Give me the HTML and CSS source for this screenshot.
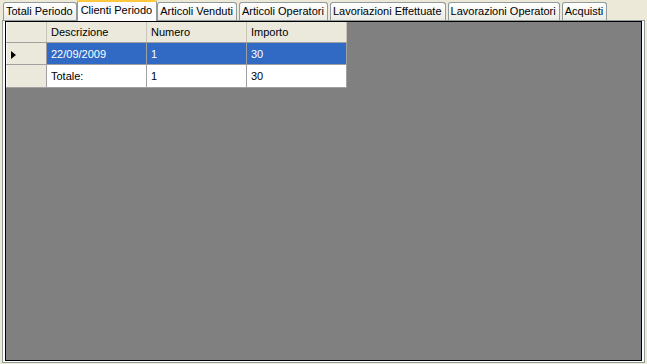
FILE: index.html
```html
<!DOCTYPE html>
<html lang="it">
<head>
    <meta charset="UTF-8">
    <title>Clienti Periodo</title>
    <link rel="stylesheet" href="styles.css">
</head>
<body>
    <div class="tabs">
        <div class="tab">Totali Periodo</div>
        <div class="tab active">Clienti Periodo</div>
        <div class="tab">Articoli Venduti</div>
        <div class="tab">Articoli Operatori</div>
        <div class="tab">Lavoriazioni Effettuate</div>
        <div class="tab">Lavorazioni Operatori</div>
        <div class="tab">Acquisti</div>
    </div>
    <div class="page">
        <div class="grid">
            <table class="data">
                <tr class="head">
                    <td class="rowhead"></td>
                    <td>Descrizione</td>
                    <td>Numero</td>
                    <td>Importo</td>
                </tr>
                <tr class="selected">
                    <td class="rowhead"><span class="arrow"></span></td>
                    <td>22/09/2009</td>
                    <td>1</td>
                    <td>30</td>
                </tr>
                <tr class="last">
                    <td class="rowhead"></td>
                    <td>Totale:</td>
                    <td>1</td>
                    <td>30</td>
                </tr>
            </table>
        </div>
    </div>
</body>
</html>
```

FILE: styles.css
```css
html, body {
    margin: 0;
    height: 364px;
    overflow: hidden;
}
body {
    display: flex;
    flex-direction: column;
    background: #ece9d8;
    font-family: "Liberation Sans", Arial, sans-serif;
    font-size: 11px;
    color: #000;
}
.tabs {
    display: flex;
    align-items: flex-end;
    height: 20px;
    padding-left: 3px;
    position: relative;
    z-index: 1;
}
.tab {
    height: 17px;
    line-height: 17px;
    padding: 0 3px 0 2px;
    margin-right: 2px;
    border: 1px solid #919b9c;
    border-bottom: none;
    border-radius: 3px 3px 0 0;
    background: linear-gradient(#ffffff, #f3f3ef 60%, #ecebe5);
    white-space: nowrap;
}
.tab.active {
    height: 19px;
    line-height: 17px;
    margin: 0 0 -1px -2px;
    padding: 0 4px 0 3px;
    border-top: 2px solid #ffc83c;
    border-radius: 2px 2px 0 0;
    background: #fcfcfe;
}
.page {
    flex: 1;
    display: flex;
    margin: 0 2px 1px 2px;
    padding: 0 2px 1px 2px;
    border: 1px solid #919b9c;
    background: #fcfcfe;
}
.grid {
    flex: 1;
    border: 1px solid #000;
    background: #808080;
}
.data {
    border-collapse: collapse;
    margin: 0;
}
.data td {
    width: 95px;
    padding: 0 0 0 4px;
    height: 21px;
    border-right: 1px solid #a0a0a0;
    border-bottom: 1px solid #a0a0a0;
    background: #fff;
    white-space: nowrap;
}
.data .head td {
    background: #ebe9dc;
    height: 20px;
    border-right: 1px solid #c8c5b4;
}
.data .last td {
    height: 22px;
}
.data td.rowhead {
    width: 35px;
    background: #ebe9dc;
    border-left: 1px solid #f8f8f4;
}
.selected td {
    background: #316ac5;
    color: #fff;
}
.arrow {
    display: inline-block;
    border-left: 5px solid #000;
    border-top: 4px solid transparent;
    border-bottom: 4px solid transparent;
    vertical-align: middle;
}
```
